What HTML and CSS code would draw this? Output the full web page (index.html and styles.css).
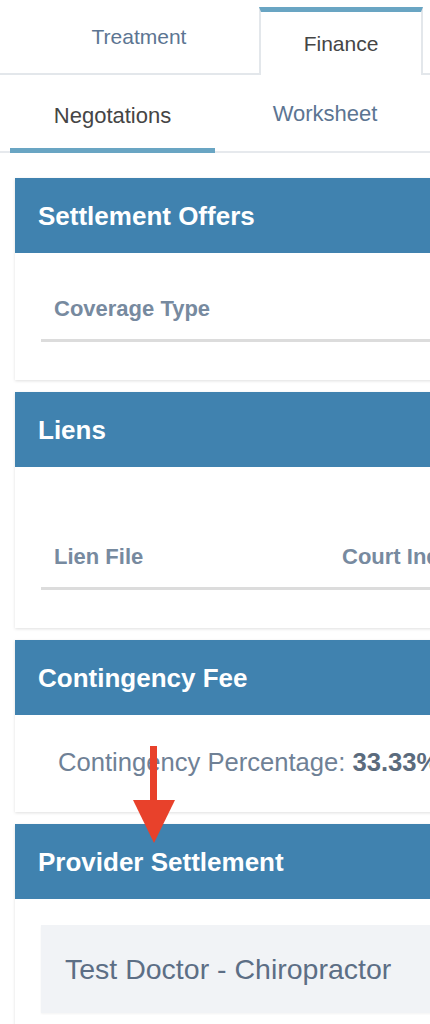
FILE: index.html
```html
<!DOCTYPE html>
<html lang="en">
<head>
  <meta charset="UTF-8">
  <title>Finance - Negotations</title>
  <link rel="stylesheet" href="styles.css">
</head>
<body>

<div class="page">
  <nav class="tabs">
    <a class="tab">Treatment</a>
    <a class="tab active">Finance</a>
  </nav>

  <nav class="subtabs">
    <a class="subtab active">Negotations</a>
    <a class="subtab wide">Worksheet</a>
  </nav>

  <div class="cards">
    <section class="card">
      <h2 class="card-head">Settlement Offers</h2>
      <div class="card-body">
        <table class="grid">
          <tr><th>Coverage Type</th></tr>
        </table>
      </div>
    </section>

    <section class="card">
      <h2 class="card-head">Liens</h2>
      <div class="card-body">
        <div class="toolbar"></div>
        <table class="grid">
          <tr><th class="col-file">Lien File</th><th>Court Index</th></tr>
        </table>
      </div>
    </section>

    <section class="card">
      <h2 class="card-head">Contingency Fee</h2>
      <div class="card-body tight">
        <p class="fee">Contingency Percentage: <b>33.33%</b></p>
      </div>
    </section>

    <section class="card">
      <h2 class="card-head">Provider Settlement</h2>
      <div class="card-body">
        <div class="provider">Test Doctor - Chiropractor</div>
      </div>
    </section>
  </div>
</div>

<!-- arrow callout -->
<svg class="arrow" width="48" height="102" viewBox="0 0 48 102">
  <rect x="20" y="2" width="7" height="58" fill="#e8412b"/>
  <polygon points="3,56 45,56 24,99" fill="#e8412b"/>
</svg>

</body>
</html>
```

FILE: styles.css
```css
* {
  margin: 0;
  padding: 0;
  box-sizing: border-box;
}

body {
  background: #fff;
  overflow: hidden;
  font-family: "Liberation Sans", Arial, sans-serif;
  position: relative;
}

.page {
  width: 640px;
}

/* top tabs */
.tabs {
  display: flex;
  align-items: flex-end;
  gap: 38px;
  padding: 7px 0 0 57px;
  height: 75px;
  border-bottom: 2px solid #e3e7eb;
}

.tab {
  width: 164px;
  text-align: center;
  font-size: 21px;
  color: #5c7592;
  align-self: flex-start;
  padding-top: 18px;
}

.tab.active {
  align-self: stretch;
  color: #454545;
  background: #fff;
  border-top: 5px solid #69a5c3;
  border-left: 2px solid #e3e7eb;
  border-right: 2px solid #e3e7eb;
  margin-bottom: -2px;
  padding-top: 20px;
}

/* sub tabs */
.subtabs {
  display: flex;
  padding-left: 10px;
  height: 78px;
  border-bottom: 2px solid #e6e9ed;
}

.subtab {
  width: 205px;
  text-align: center;
  font-size: 22px;
  color: #5c7592;
  padding-top: 28px;
}

.subtab.wide {
  width: 220px;
  padding-top: 26px;
}

.subtab.active {
  color: #454545;
  border-bottom: 5px solid #69a5c3;
  margin-bottom: -2px;
}

/* cards */
.cards {
  display: flex;
  flex-direction: column;
  gap: 12px;
  padding: 25px 0 0 15px;
}

.card {
  background: #fff;
  box-shadow: 0 1px 3px rgba(0, 0, 0, 0.13);
}

.card-head {
  background: #4082af;
  color: #fff;
  font-size: 26px;
  font-weight: bold;
  height: 75px;
  line-height: 76px;
  padding-left: 23px;
}

.card-body {
  padding: 26px 26px 38px;
}

.card-body.tight {
  padding: 26px 26px 29px;
}

.grid {
  width: 100%;
  border-collapse: collapse;
}

.grid th {
  text-align: left;
  font-size: 22px;
  font-weight: bold;
  color: #778a9f;
  line-height: 34px;
  padding: 13px;
  border-bottom: 3px solid #dcdcdc;
}

.grid .col-file {
  width: 288px;
}

.toolbar {
  height: 34px;
}

.fee {
  font-size: 25.6px;
  line-height: 42px;
  color: #6f8196;
  padding-left: 17px;
}

.fee b {
  color: #5b6b7d;
}

.provider {
  background: #f1f3f6;
  font-size: 28.5px;
  line-height: 34px;
  color: #5c6e85;
  padding: 27px 24px;
  box-shadow: 0 1px 2px rgba(0, 0, 0, 0.05);
}

.arrow {
  position: absolute;
  left: 130px;
  top: 744px;
}
```
